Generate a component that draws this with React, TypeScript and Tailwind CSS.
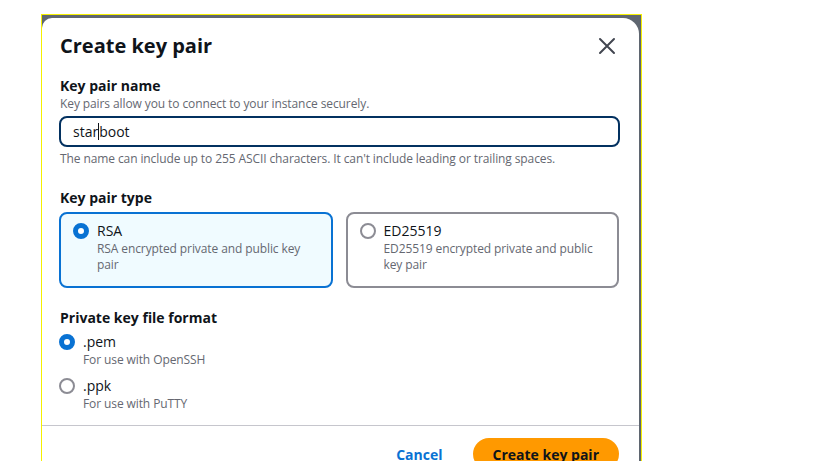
import React from "react";

function Radio({ checked }: { checked: boolean }) {
  return checked ? (
    <span className="w-4 h-4 rounded-full border-[5px] border-[#0972d3] bg-white shrink-0" />
  ) : (
    <span className="w-4 h-4 rounded-full border-2 border-[#8c8c94] bg-white shrink-0" />
  );
}

function TypeCard({
  title,
  desc,
  checked,
}: {
  title: string;
  desc: string;
  checked: boolean;
}) {
  return (
    <div
      className={
        checked
          ? "flex-1 h-[76px] rounded-lg border-2 border-[#0972d3] bg-[#f0fbff] pl-3 pr-4 pt-[7px]"
          : "flex-1 h-[76px] rounded-lg border-2 border-[#8c8c94] bg-white pl-3 pr-4 pt-[7px]"
      }
    >
      <div className="flex items-start gap-2">
        <div className="h-5 flex items-center">
          <Radio checked={checked} />
        </div>
        <div>
          <div className="text-[14px] leading-5 text-[#0f141a]">{title}</div>
          <div className="text-[12px] leading-4 tracking-[-0.1px] text-[#656871]">
            {desc}
          </div>
        </div>
      </div>
    </div>
  );
}

export default function App() {
  return (
    <div
      className="w-[819px] h-[461px] bg-white overflow-hidden pt-[14px] pl-[41px]"
      style={{ fontFamily: '"Open Sans", "Noto Sans", sans-serif' }}
    >
      <div className="w-[601px] h-[460px] border-t border-l border-r border-[#f5f000] bg-[#5f6670] pt-[3px] pr-[2px]">
        <div className="h-full bg-white rounded-tl-[10px] rounded-tr-[16px] pl-[17px] pr-[19px] pt-[16px]">
          <div className="flex items-center justify-between">
            <h1 className="text-[20px] leading-6 font-bold text-[#0f141a] pl-px">
              Create key pair
            </h1>
            <svg width="20" height="20" viewBox="0 0 20 20" className="mr-[3px]">
              <path
                d="M3 3 L17 17 M17 3 L3 17"
                stroke="#424650"
                strokeWidth="2"
                strokeLinecap="round"
              />
            </svg>
          </div>

          <div className="mt-[18px] pl-px">
            <div className="text-[14px] leading-5 font-bold text-[#0f141a]">
              Key pair name
            </div>
            <div className="text-[12px] leading-4 tracking-[-0.1px] text-[#656871]">
              Key pairs allow you to connect to your instance securely.
            </div>
          </div>
          <div className="mt-[4px] h-[31px] rounded-lg border-2 border-[#033160] flex items-center pl-3">
            <span className="text-[14px] leading-5 text-[#0f141a]">star</span>
            <span className="w-px h-[17px] bg-[#0f141a]" />
            <span className="text-[14px] leading-5 text-[#0f141a]">boot</span>
          </div>
          <div className="mt-[4px] text-[12px] leading-4 tracking-[-0.1px] text-[#656871] pl-px">
            The name can include up to 255 ASCII characters. It can't include
            leading or trailing spaces.
          </div>

          <div className="mt-[21px] text-[14px] leading-5 font-bold text-[#0f141a] pl-px">
            Key pair type
          </div>
          <div className="mt-[4px] flex gap-[13px] mr-[1px]">
            <TypeCard
              title="RSA"
              desc="RSA encrypted private and public key pair"
              checked
            />
            <TypeCard
              title="ED25519"
              desc="ED25519 encrypted private and public key pair"
              checked={false}
            />
          </div>

          <div className="mt-[20px] text-[14px] leading-5 font-bold text-[#0f141a] pl-px">
            Private key file format
          </div>
          <div className="mt-[4px] flex flex-col gap-2">
            <div className="flex items-start gap-2">
              <div className="h-5 flex items-center">
                <Radio checked />
              </div>
              <div>
                <div className="text-[14px] leading-5 text-[#0f141a]">.pem</div>
                <div className="text-[12px] leading-4 tracking-[-0.1px] text-[#656871]">
                  For use with OpenSSH
                </div>
              </div>
            </div>
            <div className="flex items-start gap-2">
              <div className="h-5 flex items-center">
                <Radio checked={false} />
              </div>
              <div>
                <div className="text-[14px] leading-5 text-[#0f141a]">.ppk</div>
                <div className="text-[12px] leading-4 tracking-[-0.1px] text-[#656871]">
                  For use with PuTTY
                </div>
              </div>
            </div>
          </div>

          <div className="mt-[13px] -ml-[17px] -mr-[19px] h-px bg-[#c6c6cd]" />

          <div className="mt-[12px] flex justify-end items-center gap-[10px] mr-[1px]">
            <button className="px-5 h-8 text-[14px] font-bold text-[#0972d3]">
              Cancel
            </button>
            <button className="px-5 h-8 rounded-full bg-[#ff9900] text-[14px] font-bold text-[#0f141a]">
              Create key pair
            </button>
          </div>
        </div>
      </div>
    </div>
  );
}
